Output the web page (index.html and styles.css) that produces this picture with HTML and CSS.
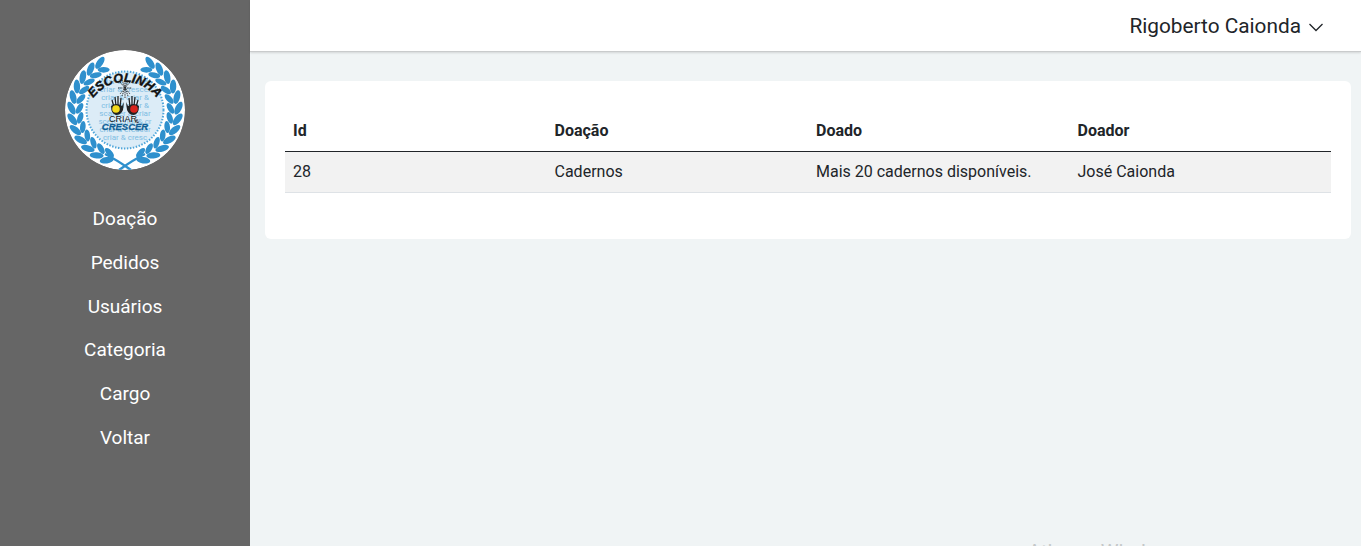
FILE: index.html
```html
<!DOCTYPE html>
<html lang="pt">

<head>
  <meta charset="UTF-8">
  <meta name="viewport" content="width=device-width, initial-scale=1.0">
  <title>Doações</title>
  <link rel="stylesheet" href="styles.css">
</head>

<body>
  <div class="app">
    <aside class="sidebar">
      <svg class="logo" viewBox="0 0 120 120" width="120" height="120" aria-label="Escolinha Criar e Crescer">
        <defs>
          <clipPath id="disc"><circle cx="60" cy="60" r="60" /></clipPath>
          <path id="arc" d="M29 47 A39.500 39.500 0 0 1 91 47" fill="none" />
          <g id="pair" fill="#2f90cd">
            <ellipse cx="60" cy="6.500" rx="7" ry="3.200" transform="rotate(-28 60 6.500)" />
            <ellipse cx="60" cy="14.500" rx="6" ry="2.800" transform="rotate(28 60 14.500)" />
          </g>
          <g id="wreath">
            <use href="#pair" transform="rotate(-28 60 60)" />
            <use href="#pair" transform="rotate(-40 60 60)" />
            <use href="#pair" transform="rotate(-52 60 60)" />
            <use href="#pair" transform="rotate(-64 60 60)" />
            <use href="#pair" transform="rotate(-76 60 60)" />
            <use href="#pair" transform="rotate(-88 60 60)" />
            <use href="#pair" transform="rotate(-100 60 60)" />
            <use href="#pair" transform="rotate(-112 60 60)" />
            <use href="#pair" transform="rotate(-124 60 60)" />
            <use href="#pair" transform="rotate(-136 60 60)" />
            <use href="#pair" transform="rotate(-148 60 60)" />
            <use href="#pair" transform="rotate(-160 60 60)" />
          </g>
          <g id="hand">
            <path d="M47 50 L49 57 M50 47 L51 56 M53 46 L53 56 M56 48 L55 57" stroke="#222" stroke-width="1.300" fill="none" />
            <path d="M46 56 Q51 52 57 56 L59 52 L58 60 Q56 65 51 65 Q46 64 46 56Z" fill="#222" />
          </g>
        </defs>
        <g clip-path="url(#disc)">
          <circle cx="60" cy="60" r="60" fill="#fff" />
          <use href="#wreath" />
          <use href="#wreath" transform="matrix(-1 0 0 1 120 0)" />
          <path d="M40 104 Q52 110 66 120 M80 104 Q68 110 54 120" stroke="#2f90cd" stroke-width="2.500" fill="none" />
          <circle cx="60" cy="60" r="38.500" fill="#dcecf7" stroke="#4fa6da" stroke-width="2" stroke-dasharray="1.500 1.500" />
          <g class="logo-bg">
            <text x="60" y="34" text-anchor="middle">criar &amp; crescer</text>
            <text x="60" y="42" text-anchor="middle">criar &amp; crescer</text>
            <text x="60" y="50" text-anchor="middle">criar &amp; criar &amp;</text>
            <text x="60" y="58" text-anchor="middle">criar &amp;  criar &amp;</text>
            <text x="60" y="66" text-anchor="middle">scarcer &amp; criar</text>
            <text x="60" y="74" text-anchor="middle">scerc criar &amp; cr</text>
            <text x="60" y="82" text-anchor="middle">criar &amp; crescer</text>
            <text x="60" y="90" text-anchor="middle">criar &amp; cresc</text>
          </g>
          <text class="logo-title"><textPath href="#arc" startOffset="50%" text-anchor="middle">ESCOLINHA</textPath></text>
          <path d="M60 48 L60 29 M53 38 L67 38 M55 32 L65 44 M65 32 L55 44 M57 30 L63 46 M63 30 L57 46" stroke="#222" stroke-width=".9" stroke-dasharray="1.500 .8" fill="none" />
          <use href="#hand" />
          <use href="#hand" transform="matrix(-1 0 0 1 120 0)" />
          <circle cx="51" cy="59" r="3.800" fill="#f4d91c" />
          <circle cx="69" cy="59" r="3.800" fill="#d9231c" />
          <text class="logo-criar" x="58" y="72" text-anchor="middle">CRIAR</text>
          <text class="logo-and" x="70" y="73">&amp;</text>
          <text class="logo-crescer" x="60" y="80" text-anchor="middle">CRESCER</text>
        </g>
      </svg>
      <nav class="menu">
        <a href="#">Doação</a>
        <a href="#">Pedidos</a>
        <a href="#">Usuários</a>
        <a href="#">Categoria</a>
        <a href="#">Cargo</a>
        <a href="#">Voltar</a>
      </nav>
    </aside>

    <div class="main">
      <header class="topbar">
        <span class="user">Rigoberto Caionda</span>
        <svg class="caret" viewBox="0 0 16 16" width="16" height="16">
          <path d="M1.500 5 L8 11.500 L14.500 5" fill="none" stroke="#212529" stroke-width="1.300" />
        </svg>
      </header>
      <section class="content">
        <div class="card">
          <table class="table">
            <thead>
              <tr>
                <th>Id</th>
                <th>Doação</th>
                <th>Doado</th>
                <th>Doador</th>
              </tr>
            </thead>
            <tbody>
              <tr>
                <td>28</td>
                <td>Cadernos</td>
                <td>Mais 20 cadernos disponíveis.</td>
                <td>José Caionda</td>
              </tr>
            </tbody>
          </table>
        </div>
      </section>
    </div>
  </div>
  <div class="watermark">Ativar o Windows</div>
</body>

</html>
```

FILE: styles.css
```css
* {
  box-sizing: border-box;
}

html,
body {
  height: 100%;
  margin: 0;
  overflow: hidden;
}

body {
  font-family: Roboto, "Liberation Sans", sans-serif;
  font-size: 16px;
  color: #212529;
  background: #f0f4f5;
}

.app {
  display: flex;
  height: 100vh;
}

.sidebar {
  flex: 0 0 250px;
  display: flex;
  flex-direction: column;
  align-items: center;
  padding-top: 50px;
  background: #666;
}

.logo {
  display: block;
}

.logo-bg text {
  font: 8px Roboto, sans-serif;
  fill: #7fbde3;
}

.logo-title {
  font: italic 700 12.500px "Liberation Sans", sans-serif;
  fill: #111;
  stroke: #111;
  stroke-width: .4px;
}

.logo-criar {
  font: 9px "Liberation Sans", sans-serif;
  fill: #111;
}

.logo-and {
  font: 6px "Liberation Sans", sans-serif;
  fill: #111;
}

.logo-crescer {
  font: italic 700 9.500px "Liberation Sans", sans-serif;
  fill: #0f5f96;
  stroke: #0f5f96;
  stroke-width: .3px;
}

.menu {
  display: flex;
  flex-direction: column;
  align-items: center;
  margin-top: 27px;
}

.menu a {
  height: 43.800px;
  line-height: 44px;
  font-size: 19px;
  color: #fff;
  text-decoration: none;
}

.main {
  flex: 1;
  min-width: 0;
}

.topbar {
  display: flex;
  align-items: center;
  justify-content: flex-end;
  gap: 7px;
  height: 52px;
  padding-right: 37px;
  background: #fff;
  border-bottom: 1px solid #c9cbcc;
  box-shadow: 0 1px 2px rgba(0, 0, 0, .12);
}

.user {
  font-size: 20.800px;
}

.caret {
  margin-top: 3px;
}

.content {
  padding: 29px 10px 0 15px;
}

.card {
  padding: 30px 20px 46px;
  background: #fff;
  border-radius: 6px;
}

.table {
  width: 100%;
  border-collapse: collapse;
  table-layout: fixed;
}

.table th,
.table td {
  padding: 0 8px;
  text-align: left;
}

.table th {
  height: 40px;
  font-weight: 700;
  border-bottom: 1px solid #212529;
}

.table td {
  height: 41px;
  background: #f2f2f2;
  border-bottom: 1px solid #dee2e6;
}

.watermark {
  position: absolute;
  top: 540px;
  left: 1028px;
  font-size: 20px;
  color: #c4c7c8;
  white-space: nowrap;
}
```
